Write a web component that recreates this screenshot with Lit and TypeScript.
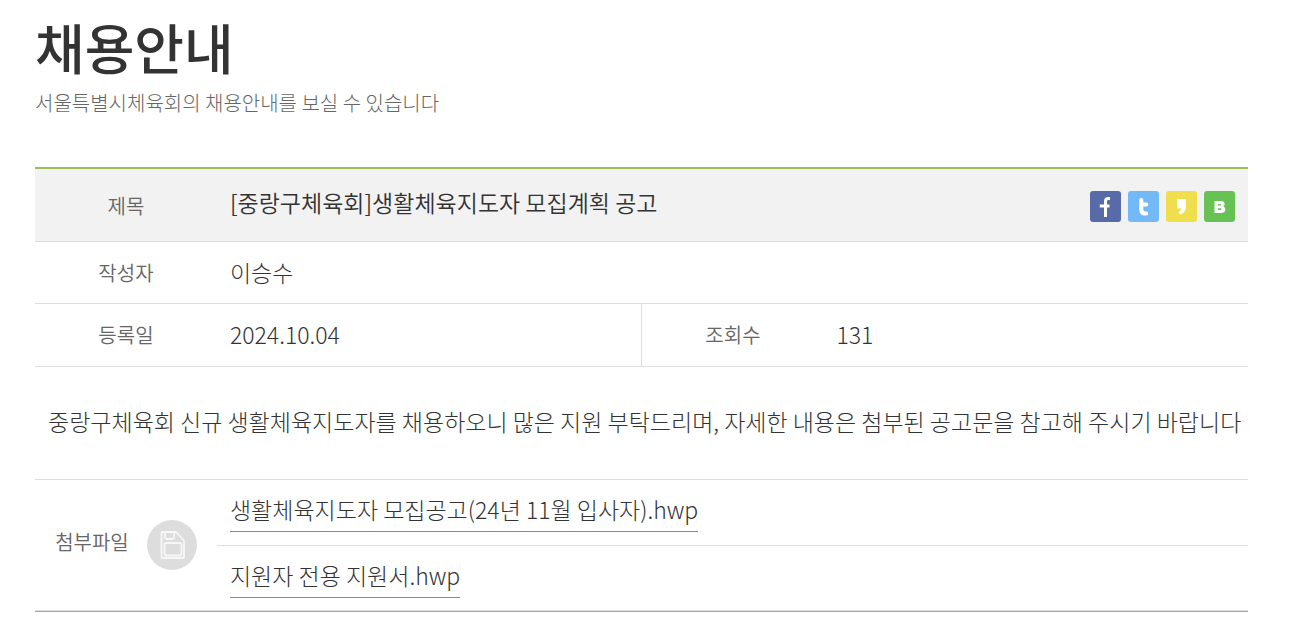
import { LitElement, html, css, svg } from "lit";
import { customElement } from "lit/decorators.js";

const shareLinks = [
  {
    name: "facebook",
    label: "페이스북 공유",
    glyph: svg`<path d="M20 7.600h-1.600c-1.800 0-2.900 1-2.900 2.800V26M9.800 15.100h9.700" fill="none" stroke="#fff" stroke-width="3"/>`,
  },
  {
    name: "twitter",
    label: "트위터 공유",
    glyph: svg`<path d="M13.300 9v9.500c0 2.700 1.300 4 3.700 4h1.300M13.300 13.500h5" fill="none" stroke="#fff" stroke-width="4" stroke-linecap="round"/>`,
  },
  {
    name: "kakao",
    label: "카카오스토리 공유",
    glyph: svg`<path d="M11.200 8h8.800v7.500c0 4-2 6.800-5.800 8l-1.700-2.400c1.700-.8 2.700-2 2.900-3.600h-4.200z" fill="#fff"/>`,
  },
  {
    name: "band",
    label: "밴드 공유",
    glyph: svg`<path fill-rule="evenodd" d="M10.500 10h6.200c2.600 0 3.900 1.200 3.900 3 0 1.200-.5 2-1.300 2.500 1.200.5 2 1.500 2 2.900 0 2.300-1.600 3.600-4.300 3.600h-6.500zM14 12.900v1.700h2c1.400 0 1.400-1.700 0-1.700zM14 17.200v1.800h2.400c1.500 0 1.500-1.800 0-1.800z" fill="#fff"/>`,
  },
];

const files = ["생활체육지도자 모집공고(24년 11월 입사자).hwp", "지원자 전용 지원서.hwp"];

@customElement("app-root")
export class AppRoot extends LitElement {
  static styles = css`
    :host {
      display: block;
      padding: 10px 64px 20px 35px;
      background: #fff;
      color: #333;
      font-family: "Noto Sans CJK KR", sans-serif;
      font-weight: 300;
    }
    h1 {
      margin: 0;
      font-size: 54px;
      line-height: 74px;
      font-weight: 500;
    }
    .intro {
      margin: 0;
      padding: 4px 0 49px;
      font-size: 20px;
      line-height: 30px;
      color: #666;
    }
    table {
      width: 100%;
      table-layout: fixed;
      border-collapse: separate;
      border-spacing: 0;
      border-top: 2px solid #9abf57;
      border-bottom: 1px solid #9abf57;
    }
    .label-col {
      width: 15%;
    }
    .value-col {
      width: 35%;
    }
    th,
    td {
      box-sizing: border-box;
      height: 63px;
      padding: 0 13px 2px;
      border-bottom: 1px solid #ddd;
      font-size: 23px;
      line-height: 32px;
      text-align: left;
      vertical-align: middle;
    }
    th {
      padding: 0;
      font-size: 20px;
      font-weight: 350;
      color: #666;
      text-align: center;
    }
    .title th,
    .title td {
      height: 73px;
      padding-top: 2px;
      padding-bottom: 0;
      background: #f2f2f2;
    }
    .title td {
      font-weight: 350;
    }
    .author td,
    .author th {
      height: 62px;
    }
    .title-line {
      display: flex;
      align-items: center;
      justify-content: space-between;
    }
    .title-text {
      padding-bottom: 8px;
    }
    .share {
      display: flex;
      gap: 7px;
    }
    .share a {
      display: block;
      width: 31px;
      height: 31px;
      border-radius: 3px;
    }
    .share svg {
      display: block;
    }
    .facebook {
      background: #576ba8;
    }
    .twitter {
      background: #74b9f7;
    }
    .kakao {
      background: #f0df4d;
    }
    .band {
      background: #68c253;
    }
    .divided {
      border-left: 1px solid #ddd;
    }
    .content td {
      height: 113px;
      padding: 0 0 4px 13px;
    }
    .content p {
      margin: 0;
    }
    .attach-label {
      display: flex;
      align-items: center;
      justify-content: center;
      gap: 18px;
    }
    .attach-label span {
      padding-bottom: 6px;
    }
    .file {
      height: 66px;
      padding: 0 13px;
    }
    tr:last-child .file {
      height: 65px;
    }
    .file a {
      display: block;
      width: fit-content;
      padding-bottom: 6px;
      border-bottom: 1px solid #888;
      color: inherit;
      text-decoration: none;
    }
  `;

  render() {
    return html`
      <h1>채용안내</h1>
      <p class="intro">서울특별시체육회의 채용안내를 보실 수 있습니다</p>
      <table>
        <colgroup>
          <col class="label-col" />
          <col class="value-col" />
          <col class="label-col" />
          <col class="value-col" />
        </colgroup>
        <tbody>
          <tr class="title">
            <th scope="row">제목</th>
            <td colspan="3">
              <div class="title-line">
                <span class="title-text">[중랑구체육회]생활체육지도자 모집계획 공고</span>
                <div class="share">
                  ${shareLinks.map(
                    (s) => html`<a class=${s.name} href="#" aria-label=${s.label}
                      ><svg width="31" height="31" viewBox="0 0 31 31" aria-hidden="true">${s.glyph}</svg></a
                    >`
                  )}
                </div>
              </div>
            </td>
          </tr>
          <tr class="author">
            <th scope="row">작성자</th>
            <td colspan="3">이승수</td>
          </tr>
          <tr>
            <th scope="row">등록일</th>
            <td>2024.10.04</td>
            <th scope="row" class="divided">조회수</th>
            <td>131</td>
          </tr>
          <tr class="content">
            <td colspan="4">
              <p>중랑구체육회 신규 생활체육지도자를 채용하오니 많은 지원 부탁드리며, 자세한 내용은 첨부된 공고문을 참고해 주시기 바랍니다</p>
            </td>
          </tr>
          ${files.map(
            (name, i) => html`<tr>
              ${i === 0
                ? html`<th scope="rowgroup" rowspan=${files.length}>
                    <div class="attach-label">
                      <span>첨부파일</span>
                      <svg width="50" height="50" viewBox="0 0 50 50" aria-hidden="true">
                        <circle cx="25" cy="25" r="25" fill="#ddd" />
                        <g fill="none" stroke="#f7f7f7" stroke-width="1.800" stroke-linejoin="round">
                          <path d="M15 12h14l8 8.500V37q0 1-1 1H15.500q-1 0-1-1V13q0-1 1-1z" />
                          <path d="M18 12.500V17q0 2 2 2h5q2 0 2-2v-4.500" />
                          <rect x="17.500" y="23" width="17" height="12.500" rx="2" />
                        </g>
                      </svg>
                    </div>
                  </th>`
                : null}
              <td class="file" colspan="3"><a href="#">${name}</a></td>
            </tr>`
          )}
        </tbody>
      </table>
    `;
  }
}
